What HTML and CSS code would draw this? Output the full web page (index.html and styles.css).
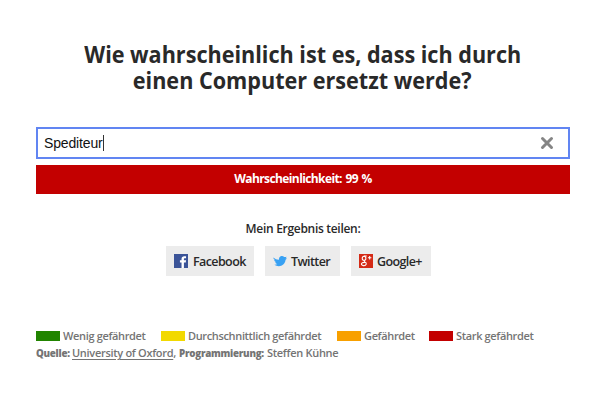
FILE: index.html
```html
<!DOCTYPE html>
<html lang="de">
<head>
<meta charset="utf-8">
<title>Wie wahrscheinlich ist es, dass ich durch einen Computer ersetzt werde?</title>
<link rel="stylesheet" href="styles.css">
</head>
<body>
<main class="page">
  <h1 class="title"><span class="line">Wie wahrscheinlich ist es, dass ich durch</span><span class="line">einen Computer ersetzt werde?</span></h1>
  <div class="field">
    <span class="value">Spediteur</span><span class="caret"></span>
    <svg class="clear" viewBox="0 0 14 14"><path d="M2.5 2.5L11.5 11.5M11.5 2.5L2.5 11.5"/></svg>
  </div>
  <div class="result"><span>Wahrscheinlichkeit: 99 %</span></div>
  <p class="share-label">Mein Ergebnis teilen:</p>
  <div class="share">
    <a class="button facebook"><svg class="icon" viewBox="0 0 13 13"><path fill="#3b5498" d="M0 0H13V13H0z"/><path fill="#fff" d="M7 13V7.8H5.5V5.8H7V4.6C7 2.8 8 2 9.6 2H11.2V3.9H10.1C9.4 3.9 9.2 4.2 9.2 4.8V5.8H11.2L10.9 7.8H9.2V13z"/></svg><span>Facebook</span></a>
    <a class="button twitter"><svg class="icon" viewBox="0 0 14 14"><path fill="#38a1f3" d="M.3 3.4Q3.4 5.9 6 5.6Q5.8 2.7 8.4 2Q10 1.7 11.2 2.9Q12.3 3.3 13.8 2.7L12.6 4.3L14 4.4L12.6 5.7Q12 9.8 8.8 11.5Q5 13.2 1.3 10.8Q3.2 10.9 4.3 10Q2.7 9.7 2.1 8.3H3.2Q1.3 7.5 1.1 5.7L2.2 6Q.2 4.9.3 3.4z"/></svg><span>Twitter</span></a>
    <a class="button google"><svg class="icon" viewBox="0 0 13 13"><path fill="#d42a16" d="M0 0H13V13H0z"/><g fill="none" stroke="#fff"><ellipse cx="4.7" cy="4" rx="1.7" ry="1.9"/><path d="M4.5 1.9H7.2M5.2 6Q4.5 6.8 5.5 7.4Q7.2 8.3 6.7 9.6Q6 11.1 4.1 10.8Q2 10.5 2.3 9Q2.7 7.7 5.5 7.8M8.3 3.5H11.5M9.9 1.9V5.1"/></g></svg><span>Google+</span></a>
  </div>
  <div class="legend">
    <span class="key low"><i class="swatch"></i><span>Wenig gefährdet</span></span>
    <span class="key medium"><i class="swatch"></i><span>Durchschnittlich gefährdet</span></span>
    <span class="key high"><i class="swatch"></i><span>Gefährdet</span></span>
    <span class="key severe"><i class="swatch"></i><span>Stark gefährdet</span></span>
  </div>
  <p class="source"><b class="source-label">Quelle:</b> <a class="link">University of Oxford</a>, <b class="author-label">Programmierung:</b> Steffen Kühne</p>
</main>
</body>
</html>
```
FILE: styles.css
```css
* { box-sizing: border-box; }
body { margin: 0; background: #fff; color: #292929; font-family: "Open Sans", "Noto Sans", sans-serif; }
.page { width: 534px; margin-left: 36px; padding-top: 41px; }
.title { display: flex; flex-direction: column; align-items: center; margin: 0 1px 0 0; font-size: 24px; line-height: 26px; font-weight: 700; white-space: nowrap; }
.line { transform: scaleX(.9); }
.field { display: flex; align-items: center; height: 32px; margin-top: 34px; padding: 0 14px 0 6px; border: 2px solid #6185f2; color: #111; font: 14px "Liberation Sans", sans-serif; }
.value { letter-spacing: -.15px; }
.caret { width: 1px; height: 16px; background: #333; }
.clear { width: 14px; height: 14px; margin-left: auto; fill: none; stroke: #858585; stroke-width: 3; stroke-linecap: round; }
.result { height: 29px; margin-top: 6px; background: #c30000; color: #fff; text-align: center; font-size: 12px; line-height: 27px; font-weight: 700; letter-spacing: -.6px; word-spacing: 1px; }
.share-label { margin: 26px 0 0; text-align: center; font-size: 12px; line-height: 18px; font-weight: 600; letter-spacing: -.3px; }
.share { display: flex; justify-content: center; gap: 11px; margin: 8px 0 0 -9px; }
.button { display: flex; align-items: center; width: 88px; height: 30px; padding-left: 8px; gap: 5px; background: #ececec; font-size: 12.5px; font-weight: 600; letter-spacing: -.6px; white-space: nowrap; }
.twitter { width: 75px; gap: 4px; }
.google { width: 80px; gap: 4px; }
.icon { width: 14px; height: 14px; flex: none; }
.legend { display: flex; margin-top: 51px; height: 17px; color: #747474; font-size: 11px; font-weight: 600; letter-spacing: -.35px; white-space: nowrap; }
.key { display: flex; align-items: center; gap: 3px; }
.low { width: 125px; }
.medium { width: 176px; }
.high { width: 92px; }
.swatch { width: 24px; height: 10px; background: #218400; }
.medium .swatch { background: #f2d900; }
.high .swatch { background: #f8a000; }
.severe .swatch { background: #c30000; }
.source { margin: 0; color: #747474; font-size: 11px; line-height: 17px; font-weight: 600; letter-spacing: -.3px; white-space: nowrap; }
.source b { display: inline-block; transform: scaleX(.89); transform-origin: left; }
.source-label { margin-right: -4.5px; }
.author-label { margin-right: -9.5px; }
.link { text-decoration: underline; text-underline-offset: 2px; }
```
